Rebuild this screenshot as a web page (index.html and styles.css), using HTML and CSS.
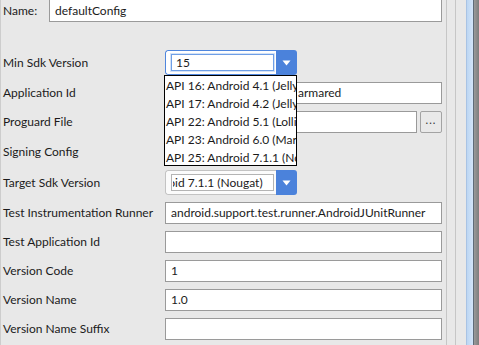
FILE: index.html
```html
<!DOCTYPE html>
<html>

<head>
    <title>Build Variant Flavor</title>
    <meta charset="UTF-8">
    <link rel="stylesheet" href="styles.css">
</head>

<body>
    <div class="window">
        <div class="form">
            <div class="row name-row">
                <span class="label name-label">Name:</span>
                <div class="field name-field">defaultConfig</div>
            </div>

            <div class="row combo-row min-sdk-row">
                <span class="label">Min Sdk Version</span>
                <div class="combo focused">
                    <div class="combo-box">
                        <div class="combo-text">15</div>
                    </div>
                    <div class="combo-btn">
                        <svg width="9" height="6" viewBox="0 0 9 6"><path d="M0.5 0.5 L8.5 0.5 L4.5 5.5 Z" fill="#fff"/></svg>
                    </div>
                </div>
            </div>

            <div class="row">
                <span class="label">Application Id</span>
                <div class="field"><span class="covered">com.example.</span>armared</div>
            </div>

            <div class="row">
                <span class="label">Proguard File</span>
                <div class="field short"></div>
                <button type="button" class="browse">...</button>
            </div>

            <div class="row combo-row">
                <span class="label">Signing Config</span>
            </div>

            <div class="row combo-row">
                <span class="label">Target Sdk Version</span>
                <div class="combo">
                    <div class="combo-box">
                        <div class="combo-text"><span class="scrolled-off">Andro</span>id 7.1.1 (Nougat)</div>
                    </div>
                    <div class="combo-btn">
                        <svg width="9" height="6" viewBox="0 0 9 6"><path d="M0.5 0.5 L8.5 0.5 L4.5 5.5 Z" fill="#fff"/></svg>
                    </div>
                </div>
            </div>

            <div class="row">
                <span class="label">Test Instrumentation Runner</span>
                <div class="field">android.support.test.runner.AndroidJUnitRunner</div>
            </div>

            <div class="row">
                <span class="label">Test Application Id</span>
                <div class="field"></div>
            </div>

            <div class="row">
                <span class="label">Version Code</span>
                <div class="field">1</div>
            </div>

            <div class="row">
                <span class="label">Version Name</span>
                <div class="field">1.0</div>
            </div>

            <div class="row">
                <span class="label">Version Name Suffix</span>
                <div class="field"></div>
            </div>

            <!-- open popup of the Min Sdk Version combo -->
            <ul class="dropdown">
                <li>API 16: Android 4.1 (Jelly Bean)</li>
                <li>API 17: Android 4.2 (Jelly Bean)</li>
                <li>API 22: Android 5.1 (Lollipop)</li>
                <li>API 23: Android 6.0 (Marshmallow)</li>
                <li>API 25: Android 7.1.1 (Nougat)</li>
            </ul>
        </div>

        <div class="side">
            <div class="gutter"></div>
            <div class="gutter wide"></div>
            <div class="scroll-edge"></div>
            <div class="frame-edge"></div>
        </div>
    </div>
</body>

</html>
```

FILE: styles.css
```css
body {
    margin: 0;
    font-family: Lato, "Open Sans", sans-serif;
    font-size: 12px;
    color: #1b1b1b;
    background-color: #e8e8e8;
    overflow: hidden;
}

.window {
    display: flex;
    height: 345px;
}

.form {
    position: relative;
    width: 446px;
    box-sizing: border-box;
    border-left: 1px solid #cdcdcd;
    padding-left: 2px;
}

.row {
    display: flex;
    align-items: center;
    height: 29px;
}

.combo-row {
    height: 31px;
}

.name-row {
    height: 23px;
    margin-top: -1px;
    margin-bottom: 25px;
}

.label {
    width: 162px;
    flex-shrink: 0;
    white-space: nowrap;
}

.name-label {
    width: 46px;
}

.field {
    width: 277px;
    height: 22px;
    box-sizing: border-box;
    border: 1px solid #9a9a9a;
    background-color: #fff;
    padding: 0 5px;
    line-height: 20px;
    white-space: nowrap;
    overflow: hidden;
}

.name-field {
    width: 393px;
    height: 23px;
    line-height: 21px;
}

.field.short {
    width: 252px;
}

.covered {
    display: inline-block;
    width: 127px;
    overflow: hidden;
    vertical-align: top;
}

.browse {
    width: 22px;
    height: 22px;
    margin-left: 3px;
    padding: 0 0 4px;
    border: 1px solid #a3a3a3;
    border-radius: 2px;
    background-color: #e9e9e9;
    font-family: inherit;
    font-size: 11px;
    color: #333;
    letter-spacing: 1px;
}

/* combo boxes */
.combo {
    display: flex;
    width: 132px;
    height: 25px;
    border-radius: 3px;
    overflow: hidden;
}

.combo-box {
    display: flex;
    align-items: center;
    width: 111px;
    box-sizing: border-box;
    padding: 0 2px 0 5px;
    border: 1px solid #c3c3c3;
    border-right: none;
    border-radius: 3px 0 0 3px;
    background-color: #fbfbfb;
}

.combo-text {
    width: 103px;
    height: 17px;
    box-sizing: border-box;
    border: 1px solid #b4b4b4;
    background-color: #fff;
    padding-left: 2px;
    line-height: 15px;
    white-space: nowrap;
    overflow: hidden;
}

.focused .combo-box {
    border-color: #4f86dd;
    background-color: #fff;
}

.focused .combo-text {
    border-color: #6f9fe6;
    box-shadow: 0 0 0 1px #d3e2f7;
    padding-left: 4px;
}

.scrolled-off {
    display: inline-block;
    width: 2px;
    direction: rtl;
    overflow: hidden;
    vertical-align: top;
    margin-left: -1px;
}

.combo-btn {
    display: flex;
    align-items: center;
    justify-content: center;
    width: 21px;
    background-color: #4b82db;
}

/* popup list */
.dropdown {
    position: absolute;
    left: 163px;
    top: 75px;
    width: 133px;
    height: 91px;
    box-sizing: border-box;
    margin: 0;
    padding: 1px 0 0;
    list-style-type: none;
    border: 1px solid #000;
    background-color: #fff;
    overflow: hidden;
}

.dropdown li {
    height: 18px;
    line-height: 18px;
    padding-left: 1px;
    white-space: nowrap;
    overflow: hidden;
}

/* right edge of the panel */
.side {
    display: flex;
    flex: 1;
}

.gutter {
    width: 8px;
    border-left: 1px solid #c6c6c6;
}

.gutter.wide {
    width: 10px;
}

.scroll-edge {
    width: 6px;
    border-left: 1px solid #a9c3e4;
    background: linear-gradient(to right, #bcd6f3, #d3e5f9);
}

.frame-edge {
    flex: 1;
    border-left: 1px solid #5f6b78;
    background: linear-gradient(to right, #9a9a9a, #7d7d7d);
}
```
